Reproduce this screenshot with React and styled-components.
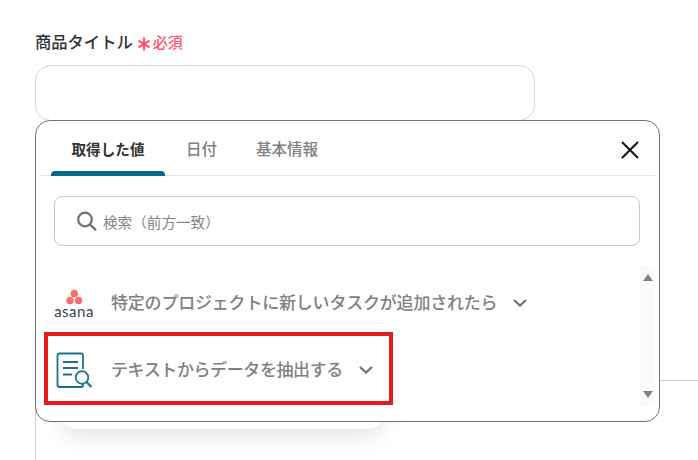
import React from "react";
import styled, { createGlobalStyle } from "styled-components";

const GlobalStyle = createGlobalStyle`
  html, body {
    margin: 0;
    padding: 0;
    height: 100%;
    background: #fff;
    overflow: hidden;
  }
  body {
    font-family: "Noto Sans CJK JP", "Noto Sans", sans-serif;
  }
`;

function ChevronIcon() {
  return (
    <svg width="16" height="10" viewBox="0 0 16 10" fill="none">
      <path d="M2 2l6 5.5L14 2" stroke="#6f6f6f" strokeWidth="2.2" />
    </svg>
  );
}

function StarIcon() {
  return (
    <StarSvg width="12" height="14" viewBox="0 0 12 14" fill="none">
      <path d="M6 0.5V13.5M0.6 3.6L11.4 10.4M11.4 3.6L0.6 10.4" stroke="#ff4d6a" strokeWidth="2.1" />
    </StarSvg>
  );
}

function AsanaLogo() {
  return (
    <AsanaWrap>
      <svg width="24" height="17" viewBox="0 0 24 17">
        <defs>
          <linearGradient id="asanaDot" x1="0" y1="0" x2="0" y2="1">
            <stop offset="0" stopColor="#ff7a5c" />
            <stop offset="1" stopColor="#fb5f78" />
          </linearGradient>
        </defs>
        <circle cx="12.3" cy="4.5" r="3.7" fill="url(#asanaDot)" />
        <circle cx="8" cy="11.5" r="3.7" fill="url(#asanaDot)" />
        <circle cx="16.6" cy="11.5" r="3.7" fill="url(#asanaDot)" />
      </svg>
      <AsanaText>asana</AsanaText>
    </AsanaWrap>
  );
}

function ExtractIcon() {
  return (
    <svg width="36" height="36" viewBox="0 0 36 36" fill="none" stroke="#1a7389" strokeWidth="1.8">
      <path d="M27 17V3.5Q27 1.5 25 1.5H3.5Q1.5 1.5 1.5 3.5V33Q1.5 35 3.5 35H25Q27 35 27 33V31.5" />
      <path d="M7 10H22M7 16H22M7 22.5H16" />
      <circle cx="26" cy="25.5" r="6.3" />
      <path d="M30.5 30L35.5 35" strokeWidth="2.2" />
    </svg>
  );
}

export default function App() {
  return (
    <>
      <GlobalStyle />
      <Page>
        <FieldLabel>
          商品タイトル
          <StarIcon />
          <Required>必須</Required>
        </FieldLabel>
        <TitleInput />
        <NextField />
        <MenuBehind />

        <Panel>
          <TabBar>
            <Tab $active>取得した値</Tab>
            <Tab>日付</Tab>
            <Tab>基本情報</Tab>
            <CloseButton>
              <svg width="18" height="18" viewBox="0 0 18 18" fill="none">
                <path d="M1 1l16 16M17 1L1 17" stroke="#111" strokeWidth="2" />
              </svg>
            </CloseButton>
          </TabBar>
          <SearchBox>
            <svg width="20" height="20" viewBox="0 0 20 20" fill="none">
              <circle cx="8" cy="8.5" r="6.8" stroke="#707070" strokeWidth="2.2" />
              <path d="M13 13.5L19 19.2" stroke="#707070" strokeWidth="2.4" />
            </svg>
            <SearchText>検索（前方一致）</SearchText>
          </SearchBox>
          <ListArea>
            <Row>
              <IconSlot>
                <AsanaLogo />
              </IconSlot>
              <RowText $spacing="-0.2px">特定のプロジェクトに新しいタスクが追加されたら</RowText>
              <ChevronIcon />
            </Row>
            <Row>
              <IconSlot>
                <ExtractIcon />
              </IconSlot>
              <RowText $spacing="-0.4px">テキストからデータを抽出する</RowText>
              <ChevronIcon />
            </Row>
            <Scrollbar>
              <ArrowUp />
              <ArrowDown />
            </Scrollbar>
          </ListArea>
          <Highlight />
        </Panel>
      </Page>
    </>
  );
}

const Page = styled.div`
  position: relative;
  width: 698px;
  height: 460px;
  overflow: hidden;
  padding: 29px 0 0 35px;
  box-sizing: border-box;
`;

const FieldLabel = styled.div`
  display: flex;
  align-items: center;
  height: 24px;
  font-size: 16.3px;
  font-weight: 500;
  color: #333;
`;

const StarSvg = styled.svg`
  margin: 6px 3px 0 5px;
`;

const Required = styled.span`
  font-size: 15px;
  font-weight: 500;
  color: #ff5470;
`;

const TitleInput = styled.div`
  width: 500px;
  height: 56px;
  margin-top: 12px;
  box-sizing: border-box;
  border: 1px solid #d4d6da;
  border-radius: 16px;
`;

const NextField = styled.div`
  width: 700px;
  height: 100px;
  margin-top: 259px;
  box-sizing: border-box;
  border-top: 1px solid #cfd1d6;
  border-left: 1px solid #cfd1d6;
`;

const MenuBehind = styled.div`
  position: absolute;
  left: 61px;
  top: 300px;
  width: 323px;
  height: 129px;
  border-radius: 16px;
  background: #fff;
  box-shadow: 0 8px 22px rgba(0, 0, 0, 0.1);
`;

const Panel = styled.div`
  position: absolute;
  left: 35px;
  top: 120px;
  width: 625px;
  height: 302px;
  box-sizing: border-box;
  border: 1px solid #707070;
  border-radius: 15px;
  background: #fff;
  padding: 0 4px;
`;

const TabBar = styled.div`
  display: flex;
  height: 55px;
  box-sizing: border-box;
  padding-left: 11px;
  border-bottom: 1px solid #e6e6e6;
`;

const Tab = styled.div`
  position: relative;
  display: flex;
  align-items: center;
  justify-content: center;
  width: ${(p) => (p.$active ? "114px" : "auto")};
  margin-right: ${(p) => (p.$active ? "21px" : "39px")};
  font-size: ${(p) => (p.$active ? "14.6px" : "15.5px")};
  font-weight: ${(p) => (p.$active ? 700 : 500)};
  color: ${(p) => (p.$active ? "#333" : "#808080")};

  ${(p) =>
    p.$active &&
    `
    &::after {
      content: "";
      position: absolute;
      left: 0;
      right: 0;
      bottom: -1px;
      height: 5px;
      border-radius: 4px 4px 0 0;
      background: #046b84;
    }
  `}
`;

const CloseButton = styled.div`
  display: flex;
  align-items: center;
  margin-left: auto;
  padding: 4px 16px 0 0;
`;

const SearchBox = styled.div`
  display: flex;
  align-items: center;
  gap: 6px;
  height: 50px;
  margin: 20px 15px 0 14px;
  padding-left: 22px;
  box-sizing: border-box;
  border: 1px solid #c8c8c8;
  border-radius: 8px;
`;

const SearchText = styled.span`
  font-size: 14.6px;
  color: #858585;
`;

const ListArea = styled.div`
  position: relative;
  margin-top: 20px;
  height: 140px;
  padding-top: 3px;
  box-sizing: border-box;
`;

const Row = styled.div`
  display: flex;
  align-items: center;
  height: 67px;
  padding-left: 15px;
`;

const IconSlot = styled.div`
  display: flex;
  justify-content: center;
  width: 38px;
  margin-right: 18px;
`;

const RowText = styled.span`
  font-size: 17px;
  font-weight: 500;
  letter-spacing: ${(p) => p.$spacing};
  color: #808080;
  margin: 0 15px 2px 0;
`;

const AsanaWrap = styled.div`
  display: flex;
  flex-direction: column;
  align-items: center;
`;

const AsanaText = styled.span`
  font-family: "Lato", sans-serif;
  font-size: 15px;
  line-height: 11px;
  letter-spacing: 0.5px;
  color: #3a4450;
`;

const Scrollbar = styled.div`
  position: absolute;
  right: 0;
  top: 0;
  width: 15px;
  height: 140px;
  background: #fafafa;
`;

const ArrowUp = styled.div`
  position: absolute;
  left: 3px;
  top: 8px;
  border-left: 5px solid transparent;
  border-right: 5px solid transparent;
  border-bottom: 7px solid #808080;
`;

const ArrowDown = styled.div`
  position: absolute;
  left: 3px;
  bottom: 8px;
  border-left: 5px solid transparent;
  border-right: 5px solid transparent;
  border-top: 7px solid #808080;
`;

const Highlight = styled.div`
  position: absolute;
  left: 8px;
  top: 211px;
  width: 349px;
  height: 73px;
  box-sizing: border-box;
  border: 4px solid #e51c1c;
`;
